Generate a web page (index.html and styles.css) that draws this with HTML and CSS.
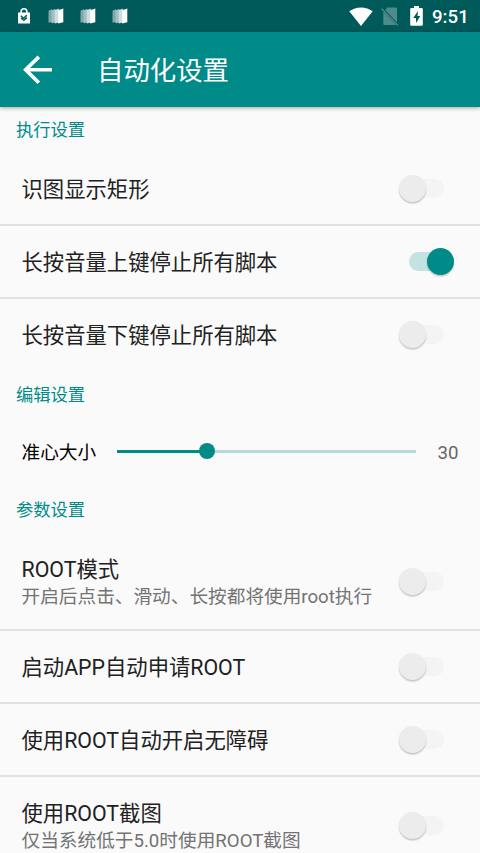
FILE: index.html
```html
<!DOCTYPE html>
<html lang="zh-CN">
<head>
<meta charset="utf-8">
<title>自动化设置</title>
<link rel="stylesheet" href="styles.css">
</head>
<body>
<svg width="0" height="0" class="defs">
  <symbol id="books" viewBox="0 0 16 16">
    <path d="M0.500 2.800 4 1v13l-3.500.8z" fill="#7fa8a8"/>
    <path d="M3.500 2.500 7.300.8v13.600l-3.800.8z" fill="#a3c0c0"/>
    <path d="M6.700 2.300 10.800.6v14l-4.100.8z" fill="#cddede"/>
    <path d="M10.100 2.300 15.300.5v13.700l-5.200 1.400z" fill="#fff"/>
  </symbol>
</svg>
<div class="status">
  <svg class="bag" viewBox="0 0 12 16"><path d="M3.100 5V3.700a2.900 2.900 0 0 1 5.800 0V5" fill="none" stroke="#fff" stroke-width="1.500"/><path d="M0 4.500h12V15.500H0z" fill="#fff"/><path d="M3 7.800 5.300 10.500 8.900 7.200M5.200 12.700 8.900 9.600M3.300 10l1.500 1.700" fill="none" stroke="#005a5a" stroke-width="1.500"/></svg>
  <svg class="book"><use href="#books"/></svg>
  <svg class="book"><use href="#books"/></svg>
  <svg class="book"><use href="#books"/></svg>
  <svg class="wifi" viewBox="0 0 24 19"><path d="M12 19 .3 4.300C7-.8 17-.8 23.700 4.300z" fill="#fff"/></svg>
  <svg class="sim" viewBox="0 0 18 19"><path d="M6.500.5H15q1 0 1 1V15.200L4.200 3zM2.300 4.700 15 18H3.300q-1 0-1-1z" fill="#4f8b8a"/><path d="M.6 1.700 16.800 18.300" stroke="#5c9392" stroke-width="1.200"/></svg>
  <svg class="battery" viewBox="0 0 13 20"><path d="M4 0h5v2h2.800q1 0 1 1v15.800q0 1-1 1H1.200q-1 0-1-1V3q0-1 1-1H4z" fill="#fff"/><path d="M8 5 3.200 12H6v5l4.300-7H7.500z" fill="#005a5a"/></svg>
  <span class="time">9:51</span>
</div>
<header class="bar">
  <svg class="back" viewBox="0 0 30 28"><path d="M16.300 1.800 3.500 14.300 16.300 26.800M3.500 14.300H29" fill="none" stroke="#fff" stroke-width="3.500"/></svg>
  <h1>自动化设置</h1>
</header>
<main>
  <h2>执行设置</h2>
  <div class="row"><div class="label">识图显示矩形</div><i class="switch"></i></div>
  <div class="row"><div class="label">长按音量上键停止所有脚本</div><i class="switch on"></i></div>
  <div class="row last"><div class="label">长按音量下键停止所有脚本</div><i class="switch"></i></div>
  <h2 class="edit">编辑设置</h2>
  <div class="slider-row"><span>准心大小</span><div class="slider"><i class="fill"></i><i class="knob"></i></div><span class="value">30</span></div>
  <h2>参数设置</h2>
  <div class="row tall"><div class="label">ROOT模式<small>开启后点击、滑动、长按都将使用root执行</small></div><i class="switch"></i></div>
  <div class="row"><div class="label">启动APP自动申请ROOT</div><i class="switch"></i></div>
  <div class="row"><div class="label">使用ROOT自动开启无障碍</div><i class="switch"></i></div>
  <div class="row tall"><div class="label">使用ROOT截图<small>仅当系统低于5.0时使用ROOT截图</small></div><i class="switch"></i></div>
</main>
</body>
</html>
```
FILE: styles.css
```css
* { box-sizing: border-box; }
body {
  margin: 0;
  height: 853px;
  overflow: hidden;
  display: flex;
  flex-direction: column;
  background: #fafafa;
  color: #212121;
  font-family: Roboto, "Noto Sans CJK SC", sans-serif;
}
.defs { display: none; }
.status {
  flex: none;
  height: 32px;
  background: #005a5a;
  display: flex;
  align-items: center;
  padding: 0 12px 0 18px;
}
.bag { width: 12px; height: 16px; margin-right: 18px; }
.book { width: 16px; height: 16px; margin-right: 16px; }
.wifi { width: 24px; height: 19px; margin-left: auto; margin-right: 8px; }
.sim { width: 18px; height: 19px; margin-right: 11px; }
.battery { width: 13px; height: 20px; margin-right: 9px; }
.time { width: 36px; padding-top: 1px; font-size: 18.67px; font-weight: 500; line-height: 32px; color: #fff; white-space: nowrap; }
.bar {
  flex: none;
  height: 75px;
  background: #008b89;
  display: flex;
  align-items: center;
  padding-left: 22px;
  box-shadow: 0 1px 4px rgba(0, 0, 0, .35);
}
.back { width: 31px; height: 29px; margin: 0 44px 1px 0; }
h1 { margin: 0; padding-top: 2px; color: #fff; font-size: 26.4px; font-weight: 400; line-height: 38px; }
main { flex: none; }
h2 { margin: 0; height: 46px; padding-left: 16px; font-size: 17.3px; font-weight: 400; line-height: 46px; color: #008b89; }
.edit { line-height: 48px; }
.row {
  height: 73px;
  display: flex;
  align-items: center;
  justify-content: space-between;
  padding: 0 26px 0 21.5px;
  border-bottom: 2px solid #e2e2e2;
}
.label { padding-top: 2px; font-size: 21.33px; line-height: 28px; white-space: nowrap; }
.last { border-bottom-color: transparent; height: 72px; }
.last .label { padding-top: 4px; }
.tall { height: 98px; }
.tall .label { padding-top: 4px; }
.label small { display: block; font-size: 18.67px; line-height: 26px; color: #737373; }
.switch { position: relative; width: 55px; height: 27px; flex: none; }
.switch::before {
  content: "";
  position: absolute;
  left: 10px;
  top: 4px;
  width: 35px;
  height: 19px;
  border-radius: 10px;
  background: #f4f4f4;
}
.switch::after {
  content: "";
  position: absolute;
  left: 0;
  top: 0;
  width: 27px;
  height: 27px;
  border-radius: 50%;
  background: #ececec;
  box-shadow: 0 1.5px 1.5px rgba(0, 0, 0, .22);
}
.switch.on::before { background: #c2e3e2; }
.switch.on::after { left: 28px; background: #008b89; }
.slider-row {
  height: 70px;
  display: flex;
  align-items: center;
  padding: 0 21.5px 2px 21.5px;
  font-size: 18.67px;
  color: #000;
}
.slider-row > span { width: 95.5px; padding-top: 3px; line-height: 28px; }
.slider { position: relative; width: 299px; height: 3px; background: #b5dbd9; }
.fill { display: block; width: 90px; height: 3px; background: #008b89; }
.knob { position: absolute; left: 82px; top: -7px; width: 16px; height: 16px; border-radius: 50%; background: #008b89; }
.slider-row .value { width: auto; margin-left: auto; color: #666; }
```
